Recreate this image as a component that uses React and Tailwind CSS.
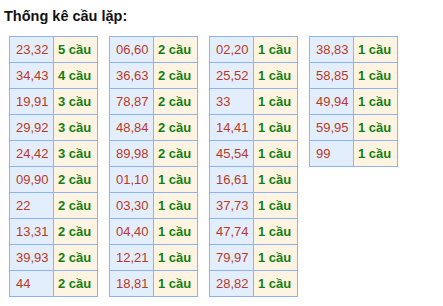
const columns = [
  [
    ['23,32', '5 cầu'],
    ['34,43', '4 cầu'],
    ['19,91', '3 cầu'],
    ['29,92', '3 cầu'],
    ['24,42', '3 cầu'],
    ['09,90', '2 cầu'],
    ['22', '2 cầu'],
    ['13,31', '2 cầu'],
    ['39,93', '2 cầu'],
    ['44', '2 cầu'],
  ],
  [
    ['06,60', '2 cầu'],
    ['36,63', '2 cầu'],
    ['78,87', '2 cầu'],
    ['48,84', '2 cầu'],
    ['89,98', '2 cầu'],
    ['01,10', '1 cầu'],
    ['03,30', '1 cầu'],
    ['04,40', '1 cầu'],
    ['12,21', '1 cầu'],
    ['18,81', '1 cầu'],
  ],
  [
    ['02,20', '1 cầu'],
    ['25,52', '1 cầu'],
    ['33', '1 cầu'],
    ['14,41', '1 cầu'],
    ['45,54', '1 cầu'],
    ['16,61', '1 cầu'],
    ['37,73', '1 cầu'],
    ['47,74', '1 cầu'],
    ['79,97', '1 cầu'],
    ['28,82', '1 cầu'],
  ],
  [
    ['38,83', '1 cầu'],
    ['58,85', '1 cầu'],
    ['49,94', '1 cầu'],
    ['59,95', '1 cầu'],
    ['99', '1 cầu'],
  ],
];

function StatTable({ rows }) {
  return (
    <table className="border-collapse border border-[#8db3f2] w-[88px] table-fixed">
      <tbody>
        {rows.map(([pair, count]) => (
          <tr key={pair} className="h-[26px]">
            <td className="w-[44px] border border-[#8db3f2] bg-[#e3eefd] pl-[6px] p-0 text-[13px] text-[#b8392a] leading-[25px]">
              {pair}
            </td>
            <td className="w-[44px] border border-[#8db3f2] bg-[#fff4e2] pl-[4px] p-0 text-[13px] font-bold text-[#118011] leading-[25px] whitespace-nowrap">
              {count}
            </td>
          </tr>
        ))}
      </tbody>
    </table>
  );
}

export default function App() {
  return (
    <div className="w-[443px] h-[306px] bg-white font-['Liberation_Sans',Arial,sans-serif]">
      <div className="pt-[8px] pl-[4px] text-[14.5px] leading-[16px] font-bold text-[#111]">
        Thống kê cầu lặp:
      </div>
      <div className="flex items-start gap-[11px] pl-[9px] mt-[12px]">
        {columns.map((rows, i) => (
          <StatTable key={i} rows={rows} />
        ))}
      </div>
    </div>
  );
}
